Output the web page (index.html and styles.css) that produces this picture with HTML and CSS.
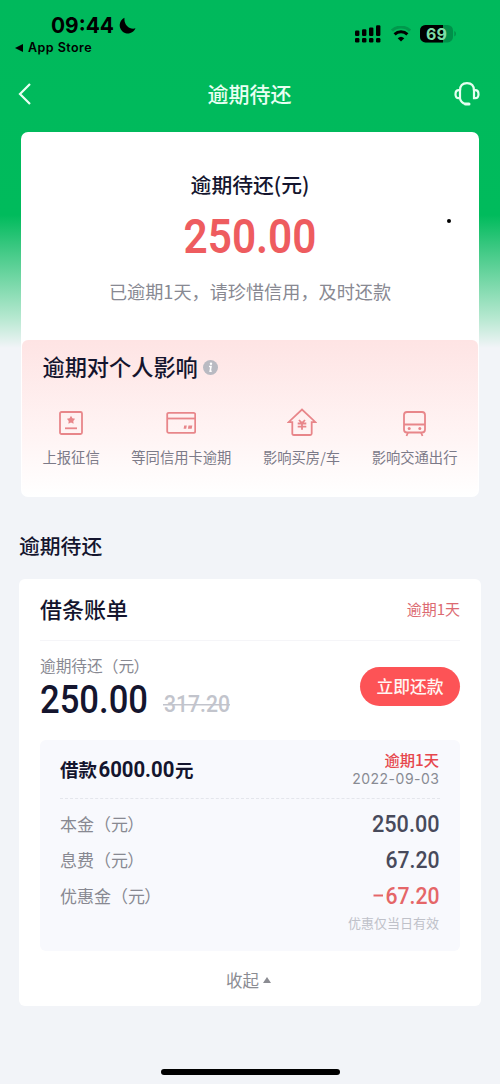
FILE: index.html
```html
<!DOCTYPE html>
<html lang="zh-CN">
<head>
<meta charset="utf-8">
<title>逾期待还</title>
<link rel="stylesheet" href="styles.css">
</head>
<body>
<div class="screen">
  <header class="status">
    <div class="status-left">
      <div class="clock"><svg class="figure" width="64" height="24"><text x="0" y="19" textLength="63" lengthAdjust="spacingAndGlyphs" font-size="22">09:44</text></svg>
        <svg width="17" height="18" viewBox="0 0 17 18"><path d="M5.500.8A8.200 8.200 0 1 0 16.500 11.300C11 13.200 4.600 8 5.500.8Z"/></svg>
      </div>
      <div class="back-app"><svg width="8" height="8" viewBox="0 0 8 8"><path d="M0 4 8 0V8Z"/></svg><span>App Store</span></div>
    </div>
    <div class="status-right">
      <svg width="26" height="18" viewBox="0 0 26 18"><rect x="0" y="5.5" width="4.4" height="5.5" rx="1.2"/><rect x="7" y="4.2" width="4.4" height="6.8" rx="1.2"/><rect x="14" y="2.4" width="4.4" height="8.6" rx="1.2"/><rect x="21" y=".2" width="4.4" height="10.8" rx="1.2"/><rect x="0" y="13" width="4.4" height="4.4" rx="1.2"/><rect x="7" y="13" width="4.4" height="4.4" rx="1.2"/><rect x="14" y="13" width="4.4" height="4.4" rx="1.2"/><rect x="21" y="13" width="4.4" height="4.4" rx="1.2"/></svg>
      <svg class="wifi" width="20" height="16" viewBox="0 0 20 16" fill="none" stroke="#000"><path d="M1 4.700a13 13 0 0 1 18 0" stroke-width="3" stroke="#00984c"/><path d="M3.600 8.400a9.200 9.200 0 0 1 12.800 0" stroke-width="3"/><path d="M10 15.500 6.700 12.200a4.800 4.800 0 0 1 6.600 0Z" fill="#000" stroke="none"/></svg>
      <div class="battery">
        <svg width="36" height="18" viewBox="0 0 36 18"><rect width="33" height="17.400" rx="5.500" fill="#00904a"/><path d="M5.500 0H23v17.400H5.500A5.500 5.500 0 0 1 0 11.900V5.500A5.500 5.500 0 0 1 5.500 0Z"/><path d="M34.300 6q1.700.6 1.700 2.700t-1.700 2.700Z" fill="#00904a"/></svg>
        <span>69</span>
      </div>
    </div>
  </header>

  <nav class="nav">
    <svg width="14" height="22" viewBox="0 0 14 22" fill="none" stroke="#e9fff3" stroke-width="2.200"><path d="M12 1 2 11 12 21"/></svg>
    <h1>逾期待还</h1>
    <svg width="26" height="26" viewBox="0 0 26 26" fill="none" stroke="#e4fff0" stroke-width="2.200" stroke-linecap="round"><path d="M6 9.500C6 4.800 8.600 2.100 13 2.100s7 2.700 7 7.400"/><path d="M6 9.200H4.800Q1.500 9.200 1.500 13.200t3.300 4H6ZM20 9.200h1.200q3.300 0 3.300 4t-3.300 4H20ZM6 17.500q1 4.300 5.500 5.500"/><path d="M11.500 23h3.500" stroke-width="3"/></svg>
  </nav>

  <section class="hero">
    <div class="hero-top">
      <h2>逾期待还(元)</h2>
      <svg class="figure hero-amount" width="134" height="40"><text x="0.500" y="37.500" textLength="133" lengthAdjust="spacingAndGlyphs" font-size="49">250.00</text></svg>
      <p>已逾期1天，请珍惜信用，及时还款</p>
      <i class="dot"></i>
    </div>
    <div class="impact">
      <div class="impact-title"><h3>逾期对个人影响</h3>
        <svg width="15" height="15" viewBox="0 0 15 15"><circle cx="7.500" cy="7.500" r="7.500" fill="#b9bac2"/><circle cx="8" cy="3.700" r="1.200" fill="#fff"/><path d="M6 6.500h2l-.8 4.700h1.500" fill="none" stroke="#fff" stroke-width="1.600"/></svg>
      </div>
      <div class="impact-list">
        <div class="impact-item"><svg width="30" height="30" viewBox="0 0 30 30"><rect x="4" y="4" width="22" height="22" rx="1.500"/><path class="solid" d="m15 7.800 1.400 2.400 2.700.6-1.800 2.100.3 2.800-2.600-1.100-2.600 1.100.3-2.800-1.800-2.100 2.700-.6Z"/><path d="M9 20.300h12"/></svg><span>上报征信</span></div>
        <div class="impact-item"><svg width="30" height="30" viewBox="0 0 30 30"><rect x="1.200" y="4.800" width="28" height="20" rx="1.500"/><path d="M1.200 10.500h28"/><path class="solid" d="m18.200 17.500h2.600l-.6 3.200h-2.600ZM22.500 17.500h3.800l-.6 3.200h-3.800Z"/></svg><span>等同信用卡逾期</span></div>
        <div class="impact-item"><svg width="30" height="30" viewBox="0 0 30 30"><path d="M5.300 14.200H1.500L15 1.500l13.500 12.700h-3.800v11.300q0 1.500-1.500 1.500H6.800q-1.500 0-1.500-1.500Z"/><path d="m12 12 3 3.200 3-3.200M10.700 15.500h8.600M10.700 18.700h8.600M15 15.200v6.500"/></svg><span>影响买房/车</span></div>
        <div class="impact-item"><svg width="30" height="30" viewBox="0 0 30 30"><rect x="4" y="4" width="21" height="20.500" rx="3"/><path d="M4 16.500h21M8 24.500 6.500 28M21 24.500 22.500 28"/><circle class="solid" cx="9.200" cy="20.500" r="1.500"/><circle class="solid" cx="19.800" cy="20.500" r="1.500"/></svg><span>影响交通出行</span></div>
      </div>
    </div>
  </section>

  <h2 class="section-title">逾期待还</h2>

  <section class="bill">
    <div class="bill-head"><h3>借条账单</h3><span>逾期1天</span></div>
    <div class="bill-summary">
      <div>
        <div class="bill-label">逾期待还（<span class="unit">元</span>）</div>
        <div class="bill-amounts">
          <svg class="figure dark" width="109" height="32"><text x="0" y="29" textLength="108" lengthAdjust="spacingAndGlyphs" font-size="39">250.00</text></svg>
          <svg class="figure old" width="68" height="24"><text x="1" y="20" textLength="66" lengthAdjust="spacingAndGlyphs" font-size="24.500">317.20</text><path d="M0 12.700H67" stroke="#c2c4cc" stroke-width="1.500"/></svg>
        </div>
      </div>
      <button class="pay">立即还款</button>
    </div>
    <div class="detail">
      <div class="detail-head">
        <div class="loan"><span>借款</span><svg class="figure loan-num" width="78" height="26"><text transform="translate(1.500 20.500) scale(.945 1)" font-size="21.500">6000.00</text></svg><span>元</span></div>
        <div class="due"><b>逾期1天</b><span>2022-09-03</span></div>
      </div>
      <div class="row"><span>本金（<span class="unit">元</span>）</span><svg class="figure" width="68" height="24"><text x="0" y="19.500" textLength="67.500" lengthAdjust="spacingAndGlyphs" font-size="24">250.00</text></svg></div>
      <div class="row"><span>息费（<span class="unit">元</span>）</span><svg class="figure" width="68" height="24"><text x="13.500" y="19.500" textLength="54" lengthAdjust="spacingAndGlyphs" font-size="24">67.20</text></svg></div>
      <div class="row"><span>优惠金（<span class="unit">元</span>）</span><svg class="figure minus" width="68" height="24"><path d="M1.500 11.500h9.500" stroke="#e56668" stroke-width="2"/><text x="13.500" y="19.500" textLength="54" lengthAdjust="spacingAndGlyphs" font-size="24">67.20</text></svg></div>
      <div class="note">优惠仅当日有效</div>
    </div>
    <div class="fold">收起<svg width="8" height="6" viewBox="0 0 8 6"><path d="M4 0 8 6H0Z" fill="#8b8c92"/></svg></div>
  </section>
  <div class="home-bar"></div>
</div>
</body>
</html>
```
FILE: styles.css
```css
* { box-sizing: border-box; }
body { margin: 0; }
h1, h2, h3, p { margin: 0; font-weight: 500; }
svg { display: block; flex: none; }
.screen {
  width: 500px;
  height: 1084px;
  overflow: hidden;
  display: flex;
  flex-direction: column;
  color: #14152e;
  font-family: "Noto Sans CJK SC", sans-serif;
  background: linear-gradient(#00b95c 0, #00bb5c 215px, #37c77f 245px, #b6e8d0 318px, #f2f4f8 348px);
}
.figure { font-family: Roboto, sans-serif; font-weight: 500; overflow: visible; }
.unit { letter-spacing: -.7px; }
.status { height: 60px; display: flex; justify-content: space-between; padding: 14px 44px 0 15px; color: #000; }
.clock { display: flex; align-items: center; gap: 4px; height: 24px; padding-left: 36px; }
.clock .figure { font-family: Inter, sans-serif; font-weight: 700; }
.back-app { display: flex; align-items: center; gap: 5px; height: 20px; font: 600 12.5px/20px Inter, sans-serif; letter-spacing: .45px; }
.status-right { display: flex; gap: 10px; padding-top: 11px; }
.wifi { margin: 1px -1px 0 0; }
.battery { position: relative; width: 36px; height: 18px; }
.battery span { position: absolute; left: 0; top: -1px; width: 33px; text-align: center; font: 700 16px/20px Inter, sans-serif; color: #7edda9; }
.nav { height: 72px; padding: 0 20px 4px 18px; display: flex; align-items: center; justify-content: space-between; color: #e9fff3; }
.nav h1 { font-size: 21px; line-height: 30px; padding-left: 13px; margin-top: -2px; }
.hero { height: 365px; margin: 0 21px; background: #fff; border-radius: 7px; padding: 0 1px 1px; flex: none; }
.hero-top { height: 208px; position: relative; display: flex; flex-direction: column; align-items: center; padding-top: 37px; }
.hero-top h2 { font-size: 20.800px; line-height: 30px; }
.hero-amount { margin-top: 16px; fill: #ee5c5f; font-weight: 600; }
.hero-top p { margin-top: 22px; font-size: 18.150px; line-height: 28px; font-weight: 400; color: #888992; }
.dot { position: absolute; right: 27px; top: 87px; width: 4px; height: 4px; border-radius: 50%; background: #000; }
.impact { height: 156px; border-radius: 6px; background: linear-gradient(#fee4e4, #fff5f5 65%, #fff); padding: 11px 20.5px 0; }
.impact-title { display: flex; align-items: center; gap: 5px; height: 32px; }
.impact-title h3 { font-size: 22.200px; line-height: 32px; margin-top: -2px; }
.impact-list { display: flex; justify-content: space-between; margin-top: 25px; }
.impact-item { display: flex; flex-direction: column; align-items: center; gap: 9px; font-size: 14.300px; line-height: 20px; color: #7c7a88; white-space: nowrap; }
.impact-item svg { fill: none; stroke: #e8868a; stroke-width: 1.800; }
.impact-item .solid { fill: #e8868a; stroke: none; }
.section-title { margin: 33px 19px 0; height: 49px; font-size: 20.800px; line-height: 30px; flex: none; }
.bill { height: 427px; flex: none; margin: 0 19px; background: #fff; border-radius: 6px; padding: 0 21px; }
.bill-head { height: 62px; border-bottom: 1px solid #f5f5f8; display: flex; align-items: center; justify-content: space-between; padding-bottom: 3px; }
.bill-head h3 { font-size: 22px; }
.bill-head span { font-size: 15px; color: #dc6a71; }
.bill-summary { height: 99px; display: flex; justify-content: space-between; }
.bill-label { padding-top: 13px; font-size: 15.700px; line-height: 24px; color: #888992; }
.bill-amounts { display: flex; align-items: center; gap: 14px; height: 44px; }
.dark { fill: #14152e; }
.old { fill: #c2c4cc; margin-top: 8px; }
.pay { margin-top: 26px; width: 100px; height: 39px; border: 0; border-radius: 20px; padding: 0; background: #fd5356; color: #fff5f3; font: 500 16.800px/39px "Noto Sans CJK SC", sans-serif; }
.detail { height: 211px; border-radius: 6px; background: #f8f9fd; padding: 0 20px; }
.detail-head { height: 59px; margin-bottom: 7px; border-bottom: 1px dashed #e4e6ec; display: flex; justify-content: space-between; }
.loan { display: flex; align-items: center; font-size: 18.500px; font-weight: 700; }
.loan-num { fill: #14152e; font-weight: 700; }
.due { display: flex; flex-direction: column; align-items: flex-end; padding: 9px 1px 0 0; }
.due b { font-size: 15.300px; line-height: 21px; font-weight: 500; color: #e6474c; }
.due span { font: 400 14px/18px Inter, sans-serif; letter-spacing: .5px; margin-right: -.5px; color: #888b93; }
.row { height: 36px; display: flex; align-items: center; justify-content: space-between; font-size: 17px; color: #888992; }
.row > span { margin-top: -2px; }
.row .figure { fill: #484a5b; }
.row .minus { fill: #e56668; }
.note { margin-top: -1px; padding-right: 1px; text-align: right; font-size: 13px; line-height: 20px; color: #bfc1c9; }
.fold { height: 55px; display: flex; align-items: center; justify-content: center; gap: 4px; padding: 3px 3px 0 0; font-size: 16.500px; color: #8b8c92; }
.home-bar { width: 179px; height: 6px; margin: 63px auto 0; border-radius: 3px; background: #000; flex: none; }
```
